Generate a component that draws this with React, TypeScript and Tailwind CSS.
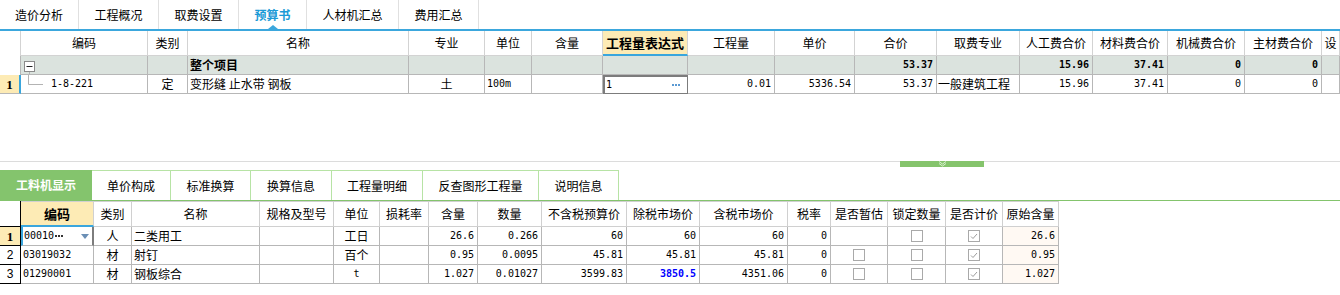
import React from "react";
import clsx from "clsx";

const mono = "font-['DejaVu_Sans_Mono',monospace] text-[10px]";
const serif = "font-['Liberation_Serif',serif] font-bold text-[13px]";

const topTabs = [
  { label: "造价分析", w: "w-[79px]" },
  { label: "工程概况", w: "w-[80px]" },
  { label: "取费设置", w: "w-[80px]" },
  { label: "预算书", w: "w-[68px]", active: true },
  { label: "人材机汇总", w: "w-[92px]" },
  { label: "费用汇总", w: "w-[80px]" },
];

const topCols = [
  { w: "w-[21px]", l: "" },
  { w: "w-[127px]", l: "编码" },
  { w: "w-[40px]", l: "类别" },
  { w: "w-[221px]", l: "名称" },
  { w: "w-[76px]", l: "专业" },
  { w: "w-[47px]", l: "单位" },
  { w: "w-[71px]", l: "含量" },
  { w: "w-[85px]", l: "工程量表达式" },
  { w: "w-[87px]", l: "工程量" },
  { w: "w-[80px]", l: "单价" },
  { w: "w-[82px]", l: "合价" },
  { w: "w-[83px]", l: "取费专业" },
  { w: "w-[73px]", l: "人工费合价" },
  { w: "w-[75px]", l: "材料费合价" },
  { w: "w-[77px]", l: "机械费合价" },
  { w: "w-[77px]", l: "主材费合价" },
  { w: "w-[18px]", l: "设" },
];

const bottomTabs = [
  { label: "工料机显示", w: "w-[92px]", active: true },
  { label: "单价构成", w: "w-[79px]" },
  { label: "标准换算", w: "w-[80px]" },
  { label: "换算信息", w: "w-[81px]" },
  { label: "工程量明细", w: "w-[91px]" },
  { label: "反查图形工程量", w: "w-[116px]" },
  { label: "说明信息", w: "w-[80px]" },
];

const bCols = [
  { w: "w-[21px]", l: "" },
  { w: "w-[73px]", l: "编码" },
  { w: "w-[38px]", l: "类别" },
  { w: "w-[128px]", l: "名称" },
  { w: "w-[74px]", l: "规格及型号" },
  { w: "w-[46px]", l: "单位" },
  { w: "w-[49px]", l: "损耗率" },
  { w: "w-[49px]", l: "含量" },
  { w: "w-[64px]", l: "数量" },
  { w: "w-[85px]", l: "不含税预算价" },
  { w: "w-[73px]", l: "除税市场价" },
  { w: "w-[88px]", l: "含税市场价" },
  { w: "w-[43px]", l: "税率" },
  { w: "w-[57px]", l: "是否暂估" },
  { w: "w-[58px]", l: "锁定数量" },
  { w: "w-[57px]", l: "是否计价" },
  { w: "w-[56px]", l: "原始含量" },
];

const bRows = [
  { n: "1", code: "00010", type: "人", name: "二类用工", unit: "工日", content: "26.6", qty: "0.266", p1: "60", p2: "60", p3: "60", tax: "0", est: false, orig: "26.6" },
  { n: "2", code: "03019032", type: "材", name: "射钉", unit: "百个", content: "0.95", qty: "0.0095", p1: "45.81", p2: "45.81", p3: "45.81", tax: "0", est: true, orig: "0.95" },
  { n: "3", code: "01290001", type: "材", name: "钢板综合", unit: "t", content: "1.027", qty: "0.01027", p1: "3599.83", p2: "3850.5", p3: "4351.06", tax: "0", est: true, orig: "1.027" },
];

function Cell({ w, className, children }: { w: string; className?: string; children?: React.ReactNode }) {
  return (
    <div className={clsx("flex h-full shrink-0 items-center overflow-hidden whitespace-nowrap border-r border-b", w, className)}>
      {children}
    </div>
  );
}

function Dots({ color, gap }: { color: string; gap: string }) {
  return (
    <span className={clsx("flex items-center", gap)}>
      <span className={clsx("h-[2px] w-[2px]", color)} />
      <span className={clsx("h-[2px] w-[2px]", color)} />
      <span className={clsx("h-[2px] w-[2px]", color)} />
    </span>
  );
}

function Box({ checked }: { checked?: boolean }) {
  return (
    <span className="flex h-[12px] w-[12px] items-center justify-center border border-[#a9a9a9] bg-white">
      {checked && (
        <svg width="8" height="7" viewBox="0 0 8 7">
          <path d="M1 3.5l2 2 4-4.5" fill="none" stroke="#9c9c9c" strokeWidth="1" />
        </svg>
      )}
    </span>
  );
}

export default function App() {
  const num = clsx(mono, "justify-end pr-[3px]");
  return (
    <div className="h-[295px] w-[1340px] overflow-hidden bg-white text-[12px] leading-none text-black font-['Noto_Sans_CJK_SC',sans-serif]">
      {/* top tabs */}
      <div className="flex h-[29px]">
        {topTabs.map((t) => (
          <div
            key={t.label}
            className={clsx(
              "relative flex items-center justify-center border-r border-[#e0e0e0]",
              t.w,
              t.active && "font-bold text-[#1a9ad6]"
            )}
          >
            {t.label}
            {t.active && (
              <span className="absolute bottom-0 left-1/2 h-0 w-0 -translate-x-1/2 border-x-[5px] border-b-[4px] border-x-transparent border-b-[#3ba7dd]" />
            )}
          </div>
        ))}
      </div>
      <div className="h-[2px] bg-[#3ba7dd]" />

      {/* top grid */}
      <div className="h-[130px]">
        <div className="flex h-[25px]">
          {topCols.map((c, i) => (
            <Cell
              key={i}
              w={c.w}
              className={clsx(
                "justify-center border-[#d3d3d3]",
                i === 0 && "border-b-0",
                i === 7 && "border-b-2 border-b-[#3aa6dd] bg-[#fdebb5] font-bold text-[13px]"
              )}
            >
              {c.l}
            </Cell>
          ))}
        </div>
        {/* group row */}
        <div className="flex h-[19px]">
          {topCols.map((c, i) => {
            const bold = clsx(num, "font-bold");
            let content: React.ReactNode = null;
            let cls = "";
            if (i === 1)
              content = (
                <svg width="20" height="19" viewBox="0 0 20 19">
                  <rect x="3.5" y="5.5" width="10" height="10" fill="white" stroke="#8a8a8a" />
                  <path d="M5.5 10.5h6" stroke="#222" />
                  <path d="M8.5 16v3" stroke="#b3b3b3" />
                </svg>
              );
            if (i === 3) {
              content = "整个项目";
              cls = "pl-[2px] font-bold";
            }
            if (i === 10) { content = "53.37"; cls = bold; }
            if (i === 12) { content = "15.96"; cls = bold; }
            if (i === 13) { content = "37.41"; cls = bold; }
            if (i === 14 || i === 15) { content = "0"; cls = bold; }
            return (
              <Cell key={i} w={c.w} className={clsx("border-[#b7b7b7]", i === 0 ? "border-b-0 bg-white" : "bg-[#dbe3de]", cls)}>
                {content}
              </Cell>
            );
          })}
        </div>
        {/* data row */}
        <div className="flex h-[19px]">
          <Cell w="w-[21px]" className={clsx(serif, "justify-center border-b-[#b7b7b7] border-r-2 border-r-[#3aa6dd] bg-[#fdebb5]")}>1</Cell>
          <Cell w="w-[127px]" className="border-[#b7b7b7]">
            <svg width="30" height="19" viewBox="0 0 30 19" className="shrink-0">
              <path d="M7.5 0v9.5H22" fill="none" stroke="#b3b3b3" />
            </svg>
            <span className={mono}>1-8-221</span>
          </Cell>
          <Cell w="w-[40px]" className="justify-center border-[#b7b7b7]">定</Cell>
          <Cell w="w-[221px]" className="border-[#b7b7b7] pl-[2px]">变形缝 止水带 钢板</Cell>
          <Cell w="w-[76px]" className="justify-center border-[#b7b7b7]">土</Cell>
          <Cell w="w-[47px]" className={clsx(mono, "border-[#b7b7b7] pl-[2px]")}>100m</Cell>
          <Cell w="w-[71px]" className="border-[#b7b7b7]" />
          <Cell w="w-[85px]" className="justify-between border-2 border-[#7c7c7c] pl-[1px] pr-[7px]">
            <span className={mono}>1</span>
            <Dots color="bg-[#5b9ad3]" gap="gap-[1px]" />
          </Cell>
          <Cell w="w-[87px]" className={clsx(num, "border-[#b7b7b7]")}>0.01</Cell>
          <Cell w="w-[80px]" className={clsx(num, "border-[#b7b7b7]")}>5336.54</Cell>
          <Cell w="w-[82px]" className={clsx(num, "border-[#b7b7b7]")}>53.37</Cell>
          <Cell w="w-[83px]" className="border-[#b7b7b7] pl-[1px]">一般建筑工程</Cell>
          <Cell w="w-[73px]" className={clsx(num, "border-[#b7b7b7]")}>15.96</Cell>
          <Cell w="w-[75px]" className={clsx(num, "border-[#b7b7b7]")}>37.41</Cell>
          <Cell w="w-[77px]" className={clsx(num, "border-[#b7b7b7]")}>0</Cell>
          <Cell w="w-[77px]" className={clsx(num, "border-[#b7b7b7]")}>0</Cell>
          <Cell w="w-[18px]" className="border-[#b7b7b7]" />
        </div>
      </div>

      {/* splitter */}
      <div className="h-[9px] border-t border-[#dcdcdc]">
        <div className="-mt-px ml-[900px] flex h-[6px] w-[84px] justify-center bg-[#85c46c]">
          <svg width="9" height="6" viewBox="0 0 9 6">
            <path d="M1 0.5l3.5 2.5 3.5-2.5M1 2.5l3.5 2.5 3.5-2.5" fill="none" stroke="#d9f0cf" />
          </svg>
        </div>
      </div>

      {/* bottom tabs */}
      <div className="flex h-[31px] border-b border-[#84c46d]">
        {bottomTabs.map((t) => (
          <div
            key={t.label}
            className={clsx(
              "flex items-center justify-center",
              t.w,
              t.active ? "bg-[#84c46d] font-bold text-white" : "border-t border-r border-[#b7e3a5]"
            )}
          >
            {t.label}
          </div>
        ))}
      </div>

      {/* bottom grid */}
      <div className="flex h-[26px]">
        {bCols.map((c, i) => (
          <Cell
            key={i}
            w={c.w}
            className={clsx(
              "justify-center",
              i === 0 ? "border-0" : "border-t border-[#d0d0d0]",
              i === 1 && "border-b-2 border-b-[#3aa6dd] bg-[#fdebb5] font-bold text-[13px]"
            )}
          >
            {c.l}
          </Cell>
        ))}
      </div>
      {bRows.map((r, ri) => {
        const b = "border-[#b7b7b7]";
        const first = ri === 0;
        return (
          <div key={r.n} className="flex h-[19px]">
            <Cell
              w="w-[21px]"
              className={clsx("justify-center border-0", first ? clsx(serif, "bg-[#fdebb5]") : "text-[12px] font-['Liberation_Sans',sans-serif]")}
            >
              {r.n}
            </Cell>
            {first ? (
              <Cell w="w-[73px]" className="justify-between border-b border-b-[#b7b7b7] border-l-2 border-l-[#3aa6dd] border-r-2 border-r-[#7d7d7d] pl-[1px] pr-[3px]">
                <span className={clsx(mono, "flex items-center gap-[1px]")}>
                  {r.code}
                  <Dots color="bg-[#333333]" gap="gap-[1px]" />
                </span>
                <span className="h-0 w-0 border-x-[4px] border-t-[5px] border-x-transparent border-t-[#6b8fb5]" />
              </Cell>
            ) : (
              <Cell w="w-[73px]" className={clsx(mono, b, "pl-[2px]")}>{r.code}</Cell>
            )}
            <Cell w="w-[38px]" className={clsx(b, "justify-center")}>{r.type}</Cell>
            <Cell w="w-[128px]" className={clsx(b, "pl-[2px]")}>{r.name}</Cell>
            <Cell w="w-[74px]" className={b} />
            <Cell w="w-[46px]" className={clsx(b, "justify-center", r.unit === "t" && mono)}>{r.unit}</Cell>
            <Cell w="w-[49px]" className={b} />
            <Cell w="w-[49px]" className={clsx(num, b)}>{r.content}</Cell>
            <Cell w="w-[64px]" className={clsx(num, b)}>{r.qty}</Cell>
            <Cell w="w-[85px]" className={clsx(num, b)}>{r.p1}</Cell>
            <Cell w="w-[73px]" className={clsx(num, b, r.n === "3" && "font-bold text-[#0000ff]")}>{r.p2}</Cell>
            <Cell w="w-[88px]" className={clsx(num, b)}>{r.p3}</Cell>
            <Cell w="w-[43px]" className={clsx(num, b)}>{r.tax}</Cell>
            <Cell w="w-[57px]" className={clsx(b, "justify-center")}>{r.est && <Box />}</Cell>
            <Cell w="w-[58px]" className={clsx(b, "justify-center")}><Box /></Cell>
            <Cell w="w-[57px]" className={clsx(b, "justify-center")}><Box checked /></Cell>
            <Cell w="w-[56px]" className={clsx(num, b, "bg-[#fff9f3]")}>{r.orig}</Cell>
          </div>
        );
      })}
    </div>
  );
}
